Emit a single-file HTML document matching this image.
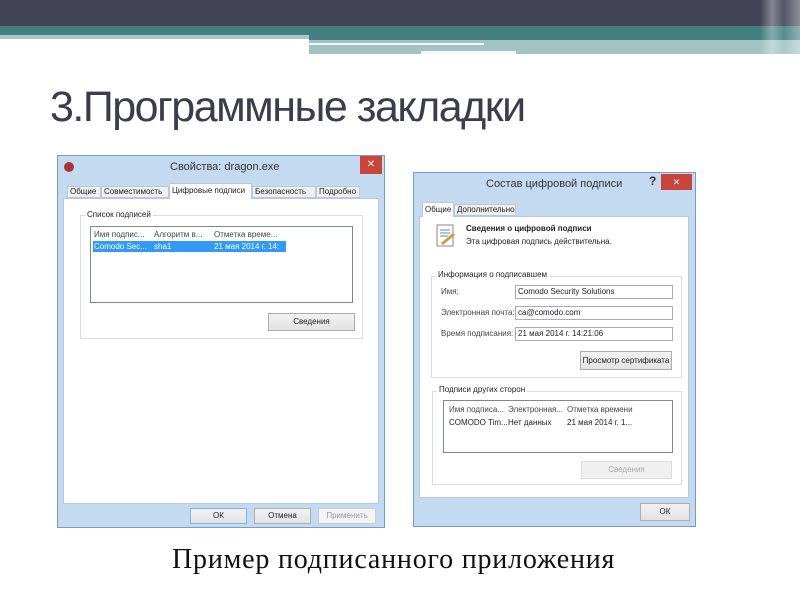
<!DOCTYPE html>
<html><head><meta charset="utf-8"><style>
*{margin:0;padding:0;box-sizing:border-box}
body{width:800px;height:600px;position:relative;background:#fff;overflow:hidden;font-family:"Liberation Sans",sans-serif}
.a{position:absolute}
.t{position:absolute;font-size:8px;color:#222;white-space:nowrap;line-height:10px}
.btn{position:absolute;border:1px solid #adadad;background:linear-gradient(#f2f2f2,#e3e3e3);font-size:8px;text-align:center;color:#222}
.inp{position:absolute;border:1px solid #abadb3;background:#fff;font-size:8px;padding-left:2px;color:#222}
</style></head><body>
<div class="a" style="left:0;top:0;width:800px;height:26px;background:#424257"></div>
<div class="a" style="left:0;top:26px;width:800px;height:9px;background:#447f80"></div>
<div class="a" style="left:0;top:35px;width:309px;height:4px;background:#a9c7c8"></div>
<div class="a" style="left:309px;top:35px;width:491px;height:8px;background:#447f80"></div>
<div class="a" style="left:309px;top:40px;width:491px;height:14px;background:#a3c2c4"></div>
<div class="a" style="left:309px;top:43px;width:175px;height:2px;background:#f2f7f7"></div>
<div class="a" style="left:421px;top:51px;width:95px;height:3px;background:#f2f7f7"></div>
<div class="a" style="left:760px;top:0;width:40px;height:54px;background:linear-gradient(90deg,rgba(255,255,255,0),rgba(255,255,255,.35) 30%,rgba(255,255,255,.1) 60%,rgba(255,255,255,.4))"></div>

<div class="a" style="left:50px;top:83px;font-size:43px;color:#3c3c4c;white-space:nowrap;letter-spacing:-1.5px">3.Программные закладки</div>

<!-- Left dialog -->
<div class="a" style="left:57px;top:155px;width:328px;height:373px;background:#c4daf0;border:1px solid #7a9cc0"></div>
<div class="a" style="left:64px;top:162px;width:10px;height:10px;border-radius:50%;background:#a33"></div>
<div class="t" style="left:170px;top:162px;font-size:11px;color:#333">Свойства: dragon.exe</div>
<div class="a" style="left:360px;top:156px;width:22px;height:18px;background:#c7453a;color:#fff;font-size:10px;text-align:center;line-height:18px">✕</div>
<div class="a" style="left:63px;top:198px;width:316px;height:306px;background:#fff;border:1px solid #b9c9d9"></div>
<div class="a" style="left:67px;top:186px;width:34px;height:12px;background:#f0f0f0;border:1px solid #b9c9d9"></div><div class="t" style="left:70px;top:187px">Общие</div>
<div class="a" style="left:101px;top:186px;width:68px;height:12px;background:#f0f0f0;border:1px solid #b9c9d9"></div><div class="t" style="left:104px;top:187px">Совместимость</div>
<div class="a" style="left:169px;top:183px;width:83px;height:16px;background:#fff;border:1px solid #b9c9d9;border-bottom:none"></div><div class="t" style="left:172px;top:186px">Цифровые подписи</div>
<div class="a" style="left:252px;top:186px;width:64px;height:12px;background:#f0f0f0;border:1px solid #b9c9d9"></div><div class="t" style="left:255px;top:187px">Безопасность</div>
<div class="a" style="left:316px;top:186px;width:44px;height:12px;background:#f0f0f0;border:1px solid #b9c9d9"></div><div class="t" style="left:319px;top:187px">Подробно</div>
<div class="a" style="left:80px;top:215px;width:283px;height:124px;border:1px solid #dcdcdc"></div>
<div class="t" style="left:85px;top:210px;background:#fff;padding:0 2px">Список подписей</div>
<div class="a" style="left:90px;top:226px;width:263px;height:77px;border:1px solid #828790"></div>
<div class="t" style="left:94px;top:230px;color:#444">Имя подпис...</div>
<div class="t" style="left:154px;top:230px;color:#444">Алгоритм в...</div>
<div class="t" style="left:214px;top:230px;color:#444">Отметка време...</div>
<div class="a" style="left:93px;top:241px;width:193px;height:11px;background:#3399ff"></div>
<div class="t" style="left:94px;top:242px;color:#fff">Comodo Sec...</div>
<div class="t" style="left:154px;top:242px;color:#fff">sha1</div>
<div class="t" style="left:214px;top:242px;color:#fff">21 мая 2014 г. 14:</div>
<div class="btn" style="left:268px;top:313px;width:87px;height:18px;line-height:16px">Сведения</div>
<div class="btn" style="left:190px;top:508px;width:57px;height:16px;line-height:14px;border-color:#7eb4ea">ОК</div>
<div class="btn" style="left:254px;top:508px;width:57px;height:16px;line-height:14px">Отмена</div>
<div class="btn" style="left:318px;top:508px;width:58px;height:16px;line-height:14px;color:#999;border-color:#ccc;background:#f4f4f4">Применить</div>

<!-- Right dialog -->
<div class="a" style="left:413px;top:172px;width:283px;height:355px;background:#c4daf0;border:1px solid #7a9cc0"></div>
<div class="t" style="left:486px;top:179px;font-size:11px;color:#333">Состав цифровой подписи</div>
<div class="t" style="left:649px;top:176px;font-size:12px;font-weight:bold;color:#333">?</div>
<div class="a" style="left:661px;top:174px;width:31px;height:16px;background:#c7453a;color:#fff;font-size:9px;text-align:center;line-height:16px">✕</div>
<div class="a" style="left:419px;top:216px;width:270px;height:282px;background:#fff;border:1px solid #b9c9d9"></div>
<div class="a" style="left:422px;top:202px;width:32px;height:15px;background:#fff;border:1px solid #b9c9d9;border-bottom:none"></div><div class="t" style="left:425px;top:205px">Общие</div>
<div class="a" style="left:454px;top:204px;width:62px;height:12px;background:#f0f0f0;border:1px solid #b9c9d9"></div><div class="t" style="left:457px;top:205px">Дополнительно</div>
<svg class="a" style="left:436px;top:224px" width="22" height="24"><rect x="1" y="1" width="16" height="21" fill="#fff" stroke="#888"/><path d="M4 6h10M4 9h10M4 12h8" stroke="#5a8ac6"/><path d="M5 19l12-10 2 2-12 10z" fill="#c8a040"/></svg>
<div class="t" style="left:466px;top:224px;font-weight:bold">Сведения о цифровой подписи</div>
<div class="t" style="left:466px;top:237px">Эта цифровая подпись действительна.</div>
<div class="a" style="left:431px;top:276px;width:251px;height:102px;border:1px solid #dcdcdc"></div>
<div class="t" style="left:436px;top:270px;background:#fff;padding:0 2px">Информация о подписавшем</div>
<div class="t" style="left:441px;top:287px;color:#444">Имя:</div>
<div class="t" style="left:441px;top:308px;color:#444">Электронная почта:</div>
<div class="t" style="left:441px;top:329px;color:#444">Время подписания:</div>
<div class="inp" style="left:515px;top:285px;width:158px;height:14px;line-height:12px">Comodo Security Solutions</div>
<div class="inp" style="left:515px;top:306px;width:158px;height:14px;line-height:12px">ca@comodo.com</div>
<div class="inp" style="left:515px;top:327px;width:158px;height:14px;line-height:12px">21 мая 2014 г. 14:21:06</div>
<div class="btn" style="left:580px;top:351px;width:92px;height:19px;line-height:17px">Просмотр сертификата</div>
<div class="a" style="left:432px;top:391px;width:250px;height:94px;border:1px solid #dcdcdc"></div>
<div class="t" style="left:437px;top:385px;background:#fff;padding:0 2px">Подписи других сторон</div>
<div class="a" style="left:443px;top:400px;width:230px;height:53px;border:1px solid #828790"></div>
<div class="t" style="left:449px;top:405px;color:#444">Имя подписа...</div>
<div class="t" style="left:508px;top:405px;color:#444">Электронная...</div>
<div class="t" style="left:567px;top:405px;color:#444">Отметка времени</div>
<div class="t" style="left:449px;top:418px">COMODO Tim...</div>
<div class="t" style="left:508px;top:418px">Нет данных</div>
<div class="t" style="left:567px;top:418px">21 мая 2014 г. 1...</div>
<div class="btn" style="left:581px;top:461px;width:91px;height:18px;line-height:16px;color:#aaa;border-color:#ddd;background:#f0f0f0">Сведения</div>
<div class="btn" style="left:640px;top:503px;width:50px;height:18px;line-height:16px">ОК</div>

<div class="a" style="left:172px;top:544px;width:460px;white-space:nowrap;font-family:'Liberation Serif',serif;font-size:28px;line-height:32px;color:#111;letter-spacing:0.8px">Пример подписанного приложения</div>
</body></html>
